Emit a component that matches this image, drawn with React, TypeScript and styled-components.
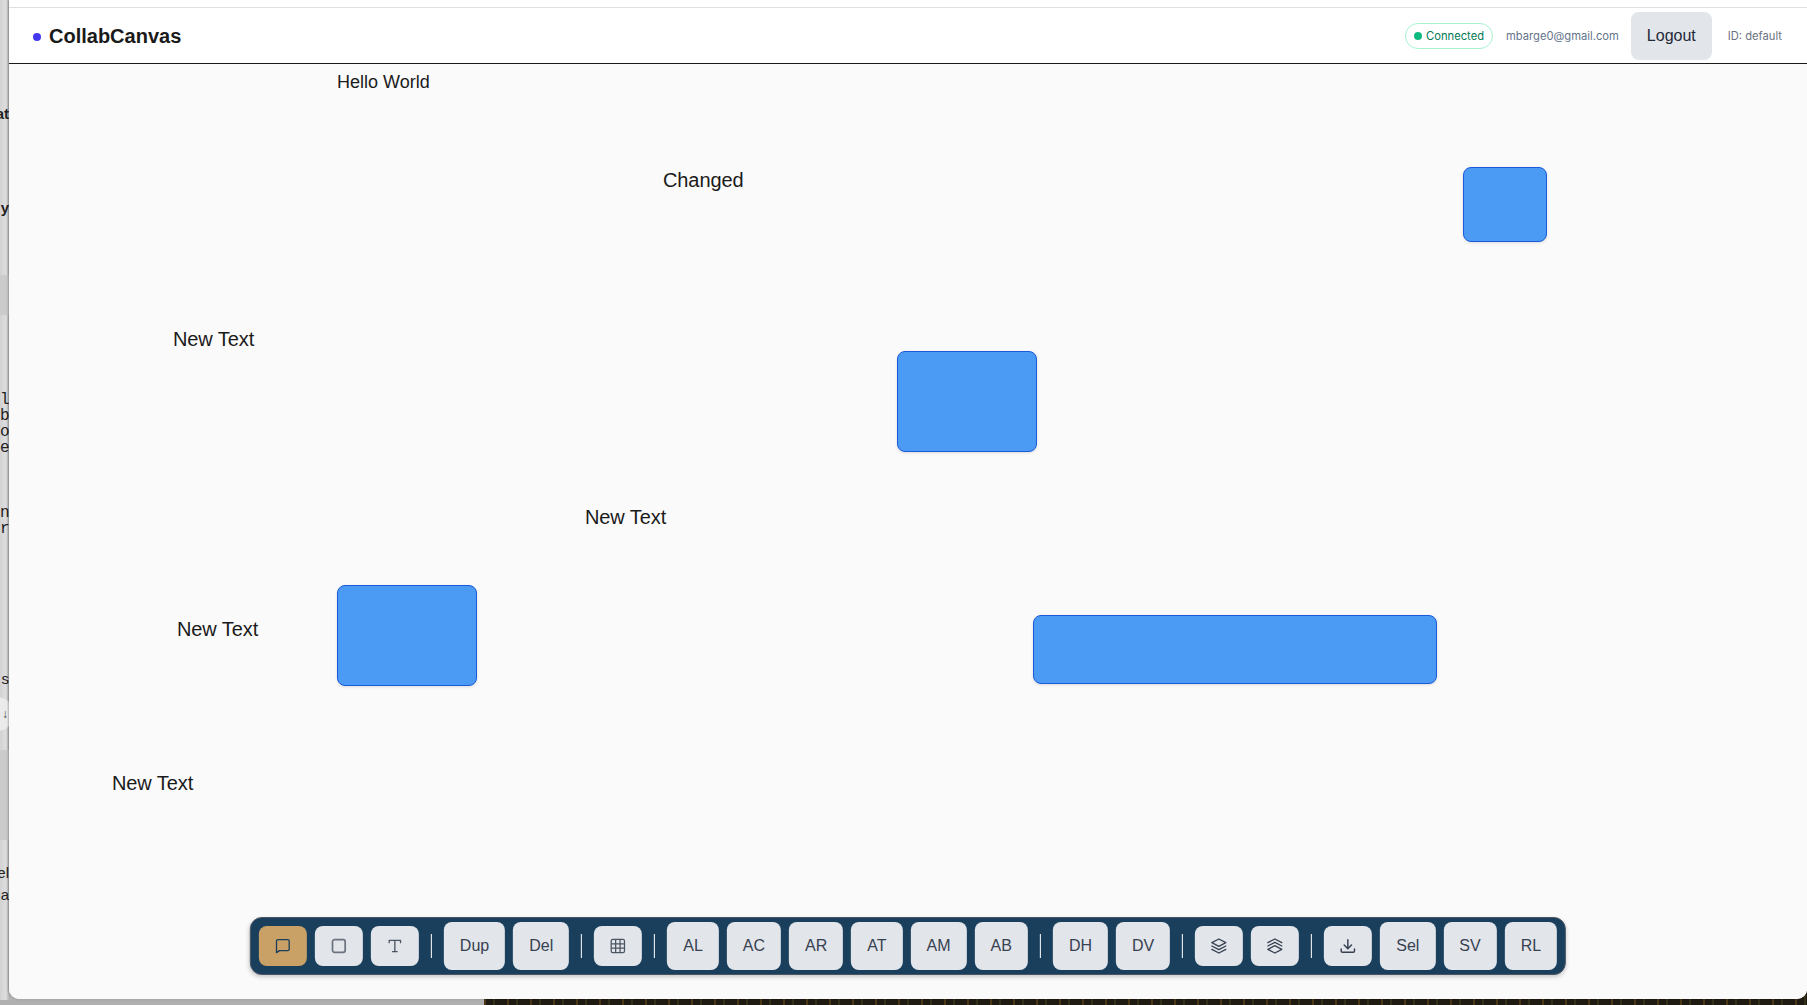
import styled, { createGlobalStyle } from "styled-components";

const GlobalStyle = createGlobalStyle`
  * {
    box-sizing: border-box;
  }
  html,
  body {
    margin: 0;
    height: 100%;
    overflow: hidden;
    background: #b0b0b0;
    font-family: "Liberation Sans", Arial, sans-serif;
  }
`;

const Desktop = styled.div`
  position: relative;
  width: 1807px;
  height: 1005px;
  overflow: hidden;
  background: linear-gradient(90deg, #d2d2d2 0, #dedede 6px, #b4b4b4 9px);
`;

const BackFragment = styled.span<{ $top: number; $bold?: boolean }>`
  position: absolute;
  top: ${(p) => p.$top}px;
  right: calc(100% - 9px);
  white-space: nowrap;
  font-size: 15px;
  line-height: 16px;
  font-weight: ${(p) => (p.$bold ? 700 : 400)};
  color: #222;
`;

const BackCode = styled.span<{ $top: number }>`
  position: absolute;
  left: 0;
  top: ${(p) => p.$top}px;
  white-space: nowrap;
  font-family: "Liberation Mono", monospace;
  font-size: 16px;
  line-height: 16px;
  color: #222;
`;

const BackBand = styled.div<{ $top: number; $height: number; $width?: number; $shade?: string }>`
  position: absolute;
  left: 0;
  top: ${(p) => p.$top}px;
  width: ${(p) => p.$width ?? 9}px;
  height: ${(p) => p.$height}px;
  background: ${(p) => p.$shade ?? "#cbcbcb"};
`;

const BackCircle = styled.div`
  position: absolute;
  left: -20px;
  top: 697px;
  width: 34px;
  height: 34px;
  display: flex;
  align-items: center;
  justify-content: flex-end;
  padding-right: 6px;
  border-radius: 50%;
  background: #ebebeb;
  font-size: 12px;
  color: #444;
`;

const Photo = styled.div`
  position: absolute;
  left: 484px;
  right: 0;
  bottom: 0;
  height: 14px;
  background:
    repeating-linear-gradient(90deg, rgba(110, 80, 30, 0.55) 0 2px, transparent 2px 9px, rgba(90, 90, 40, 0.35) 9px 11px, transparent 11px 23px),
    #1f1a12;
`;

const Window = styled.div`
  position: absolute;
  left: 9px;
  top: 0;
  width: 1798px;
  height: 999px;
  display: flex;
  flex-direction: column;
  background: #fafafa;
  border-radius: 0 0 10px 10px;
  overflow: hidden;
  box-shadow: -1px 0 2px rgba(0, 0, 0, 0.25);
`;

const TopStrip = styled.div`
  height: 8px;
  flex-shrink: 0;
  background: #fff;
  border-bottom: 1px solid #e0e0e0;
`;

const Header = styled.header`
  height: 56px;
  flex-shrink: 0;
  display: flex;
  align-items: center;
  justify-content: space-between;
  padding: 0 25px 0 24px;
  background: #fff;
  border-bottom: 1px solid #1a1a1a;
`;

const Brand = styled.div`
  display: flex;
  align-items: center;
  gap: 8px;
  padding-top: 2px;
  font-size: 20px;
  font-weight: 700;
  color: #1a1a1a;
`;

const BrandDot = styled.span`
  width: 8px;
  height: 8px;
  border-radius: 50%;
  background: #4338f0;
`;

const HeaderRight = styled.div`
  display: flex;
  align-items: center;
  gap: 12px;
`;

const StatusBadge = styled.div`
  display: flex;
  align-items: center;
  gap: 4px;
  height: 26px;
  margin-right: 1px;
  padding: 0 8px;
  border: 1px solid #a7f3d0;
  border-radius: 13px;
  background: #fff;
  font-family: Inter, sans-serif;
  font-size: 11.2px;
  color: #047857;
`;

const StatusDot = styled.span`
  width: 8px;
  height: 8px;
  border-radius: 50%;
  background: #10b981;
`;

const Email = styled.span`
  font-family: Inter, sans-serif;
  font-size: 11.2px;
  color: #64748b;
`;

const LogoutButton = styled.button`
  height: 48px;
  padding: 0 16px;
  border: none;
  border-radius: 8px;
  background: #e2e5ea;
  font: 16px "Liberation Sans", sans-serif;
  color: #1f2937;
`;

const RoomId = styled.span`
  margin-left: 4px;
  font-family: Inter, sans-serif;
  font-size: 11.2px;
  color: #6b7280;
`;

const Canvas = styled.main`
  position: relative;
  flex: 1;
  background: #fafafa;
`;

const CanvasText = styled.span<{ $x: number; $y: number; $size: number }>`
  position: absolute;
  left: ${(p) => p.$x}px;
  top: ${(p) => p.$y}px;
  font-size: ${(p) => p.$size}px;
  line-height: 24px;
  letter-spacing: ${(p) => (p.$size > 18 ? "-0.1px" : "0")};
  white-space: nowrap;
  color: #1a1a1a;
`;

const CanvasRect = styled.div<{ $x: number; $y: number; $w: number; $h: number }>`
  position: absolute;
  left: ${(p) => p.$x}px;
  top: ${(p) => p.$y}px;
  width: ${(p) => p.$w}px;
  height: ${(p) => p.$h}px;
  background: #4b9bf5;
  border: 1px solid #1a5bdc;
  border-radius: 8px;
  box-shadow: 0 1px 3px rgba(0, 0, 0, 0.12);
`;

const Toolbar = styled.div`
  position: absolute;
  left: 50%;
  bottom: 24px;
  transform: translateX(-50%);
  display: flex;
  align-items: center;
  gap: 8px;
  padding: 4px 8px;
  background: #1a3f5c;
  border: 1px solid #4b5563;
  border-radius: 12px;
  box-shadow: 0 2px 4px rgba(0, 0, 0, 0.2);
`;

const ToolButton = styled.button<{ $active?: boolean }>`
  padding: 12px 16px;
  border: none;
  border-radius: 8px;
  background: ${(p) => (p.$active ? "#c9a066" : "#e2e5ea")};
  color: ${(p) => (p.$active ? "#1a3f5c" : "#374151")};
  font: 16px/24px "Liberation Sans", sans-serif;
  display: flex;
  align-items: center;

  svg {
    display: block;
    width: 16px;
    height: 16px;
  }
`;

const Separator = styled.div`
  width: 1px;
  height: 24px;
  margin: 0 4px;
  background: #fff;
`;

const iconProps = {
  viewBox: "0 0 24 24",
  fill: "none",
  stroke: "currentColor",
  strokeWidth: 2,
  strokeLinecap: "round" as const,
  strokeLinejoin: "round" as const,
};

function CommentIcon() {
  return (
    <svg {...iconProps}>
      <path d="M2.5 22V4.5a2 2 0 0 1 2-2h15a2 2 0 0 1 2 2V17a2 2 0 0 1-2 2H7z" />
    </svg>
  );
}

function RectIcon() {
  return (
    <svg {...iconProps} stroke="#6b7280" strokeWidth={2.6}>
      <rect x="2.5" y="2.5" width="19" height="19" rx="3" />
    </svg>
  );
}

function TextIcon() {
  return (
    <svg {...iconProps} stroke="#4b5563">
      <path d="M3.5 7V3.5h17V7M12 3.5v17M8.5 20.5h7" />
    </svg>
  );
}

function GridIcon() {
  return (
    <svg {...iconProps} stroke="#4b5563" strokeWidth={1.9} strokeLinecap="butt">
      <rect x="2" y="2" width="20" height="20" rx="2.5" />
      <path d="M2 8.7h20M2 15.3h20M8.7 2v20M15.3 2v20" />
    </svg>
  );
}

function LayersUpIcon() {
  return (
    <svg {...iconProps} strokeWidth={1.9}>
      <path d="M12 1.5 1.5 7 12 12.5 22.5 7z" />
      <path d="m1.5 12 10.5 5.5L22.5 12" />
      <path d="m1.5 17 10.5 5.5L22.5 17" />
    </svg>
  );
}

function LayersDownIcon() {
  return (
    <svg {...iconProps} strokeWidth={1.9}>
      <path d="M1.5 7 12 1.5 22.5 7" />
      <path d="M1.5 12 12 6.5 22.5 12" />
      <path d="M12 11.5 1.5 17 12 22.5 22.5 17z" />
    </svg>
  );
}

function ExportIcon() {
  return (
    <svg {...iconProps} strokeWidth={2.2}>
      <path d="M12 2.5v13M6.5 10.5l5.5 5.5 5.5-5.5" />
      <path d="M2 16.5v3a2 2 0 0 0 2 2h16a2 2 0 0 0 2-2v-3" />
    </svg>
  );
}

const texts = [
  { label: "Hello World", x: 328, y: 6, size: 18 },
  { label: "Changed", x: 654, y: 104, size: 20 },
  { label: "New Text", x: 164, y: 263, size: 20 },
  { label: "New Text", x: 576, y: 441, size: 20 },
  { label: "New Text", x: 168, y: 553, size: 20 },
  { label: "New Text", x: 103, y: 707, size: 20 },
];

const rects = [
  { x: 1454, y: 103, w: 84, h: 75 },
  { x: 888, y: 287, w: 140, h: 101 },
  { x: 328, y: 521, w: 140, h: 101 },
  { x: 1024, y: 551, w: 404, h: 69 },
];

export default function App() {
  return (
    <Desktop>
      <GlobalStyle />
      <BackBand $top={275} $height={40} />
      <BackBand $top={750} $height={90} />
      <BackBand $top={1000} $height={5} $width={484} $shade="#b0b0b0" />
      <BackFragment $bold $top={106}>at</BackFragment>
      <BackFragment $bold $top={200}>y</BackFragment>
      <BackCode $top={392}>l:</BackCode>
      <BackCode $top={408}>bl</BackCode>
      <BackCode $top={424}>o</BackCode>
      <BackCode $top={440}>e</BackCode>
      <BackCode $top={505}>n:</BackCode>
      <BackCode $top={521}>r</BackCode>
      <BackFragment $top={671}>s</BackFragment>
      <BackCircle>↓</BackCircle>
      <BackFragment $top={865}>el</BackFragment>
      <BackFragment $top={887}>na</BackFragment>
      <Photo />
      <Window>
        <TopStrip />
        <Header>
          <Brand>
            <BrandDot />
            CollabCanvas
          </Brand>
          <HeaderRight>
            <StatusBadge>
              <StatusDot />
              Connected
            </StatusBadge>
            <Email>mbarge0@gmail.com</Email>
            <LogoutButton>Logout</LogoutButton>
            <RoomId>ID: default</RoomId>
          </HeaderRight>
        </Header>
        <Canvas>
          {texts.map((t, i) => (
            <CanvasText key={i} $x={t.x} $y={t.y} $size={t.size}>
              {t.label}
            </CanvasText>
          ))}
          {rects.map((r, i) => (
            <CanvasRect key={i} $x={r.x} $y={r.y} $w={r.w} $h={r.h} />
          ))}
          <Toolbar>
            <ToolButton $active><CommentIcon /></ToolButton>
            <ToolButton><RectIcon /></ToolButton>
            <ToolButton><TextIcon /></ToolButton>
            <Separator />
            <ToolButton>Dup</ToolButton>
            <ToolButton>Del</ToolButton>
            <Separator />
            <ToolButton><GridIcon /></ToolButton>
            <Separator />
            <ToolButton>AL</ToolButton>
            <ToolButton>AC</ToolButton>
            <ToolButton>AR</ToolButton>
            <ToolButton>AT</ToolButton>
            <ToolButton>AM</ToolButton>
            <ToolButton>AB</ToolButton>
            <Separator />
            <ToolButton>DH</ToolButton>
            <ToolButton>DV</ToolButton>
            <Separator />
            <ToolButton><LayersUpIcon /></ToolButton>
            <ToolButton><LayersDownIcon /></ToolButton>
            <Separator />
            <ToolButton><ExportIcon /></ToolButton>
            <ToolButton>Sel</ToolButton>
            <ToolButton>SV</ToolButton>
            <ToolButton>RL</ToolButton>
          </Toolbar>
        </Canvas>
      </Window>
    </Desktop>
  );
}
